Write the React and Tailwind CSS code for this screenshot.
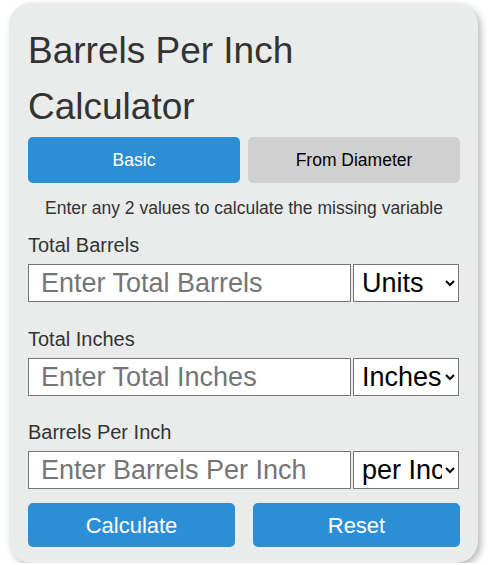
import React, { useState } from 'react';

// Barrels per inch calculator card
const fields = [
  {
    label: 'Total Barrels',
    placeholder: 'Enter Total Barrels',
    options: ['Units', 'Barrels (bbl)', 'Gallons (gal)'],
  },
  {
    label: 'Total Inches',
    placeholder: 'Enter Total Inches',
    options: ['Inches (in)', 'Feet (ft)', 'Centimeters (cm)'],
  },
  {
    label: 'Barrels Per Inch',
    placeholder: 'Enter Barrels Per Inch',
    options: ['per Inch (bbl/in)', 'per Foot (bbl/ft)'],
  },
];

const App = () => {
  const [tab, setTab] = useState('basic');
  const [values, setValues] = useState(['', '', '']);

  const reset = () => setValues(['', '', '']);

  return (
    <div className="pt-[3px] pl-[9px] font-['Liberation_Sans',Arial,sans-serif]">
      <div className="w-[469px] rounded-[22px] bg-[#eaebeb] pt-[20px] pb-[16px] pl-[19px] pr-[18px] shadow-[3px_3px_7px_rgba(0,0,0,0.28)]">
        <h1 className="text-[37px] leading-[56px] font-normal text-[#333333]">
          Barrels Per Inch Calculator
        </h1>

        <div className="mt-[2px] flex gap-[8px]">
          <button
            onClick={() => setTab('basic')}
            className={`h-[46px] flex-1 rounded-[5px] text-[17.5px] ${
              tab === 'basic' ? 'bg-[#2c8fd6] text-white' : 'bg-[#d0d0d0] text-black'
            }`}
          >
            Basic
          </button>
          <button
            onClick={() => setTab('diameter')}
            className={`h-[46px] flex-1 rounded-[5px] text-[17.5px] ${
              tab === 'diameter' ? 'bg-[#2c8fd6] text-white' : 'bg-[#d0d0d0] text-black'
            }`}
          >
            From Diameter
          </button>
        </div>

        <p className="mt-[15px] text-center text-[17.5px] leading-[20px] text-[#333333]">
          Enter any 2 values to calculate the missing variable
        </p>

        {fields.map((f, i) => (
          <div key={f.label} className={i === 0 ? 'mt-[16px]' : i === 1 ? 'mt-[26px]' : 'mt-[25px]'}>
            <label className="block text-[20px] leading-[23px] text-[#333333]">{f.label}</label>
            <div className="mt-[7px] flex gap-[2px]">
              <input
                type="number"
                value={values[i]}
                onChange={(e) => {
                  const next = [...values];
                  next[i] = e.target.value;
                  setValues(next);
                }}
                placeholder={f.placeholder}
                className="h-[38px] w-[323px] border border-[#767676] bg-white pl-[12px] text-[27px] text-black placeholder:text-[#757575] outline-none"
              />
              <select className="h-[38px] w-[106px] border border-[#767676] bg-white pl-[4px] text-[27px] text-black">
                {f.options.map((o) => (
                  <option key={o}>{o}</option>
                ))}
              </select>
            </div>
          </div>
        ))}

        <div className="mt-[14px] flex gap-[18px]">
          <button className="h-[44px] w-[207px] rounded-[5px] bg-[#2c8fd6] text-[22px] text-white">
            Calculate
          </button>
          <button
            onClick={reset}
            className="h-[44px] w-[207px] rounded-[5px] bg-[#2c8fd6] text-[22px] text-white"
          >
            Reset
          </button>
        </div>
      </div>
    </div>
  );
};

export default App;
